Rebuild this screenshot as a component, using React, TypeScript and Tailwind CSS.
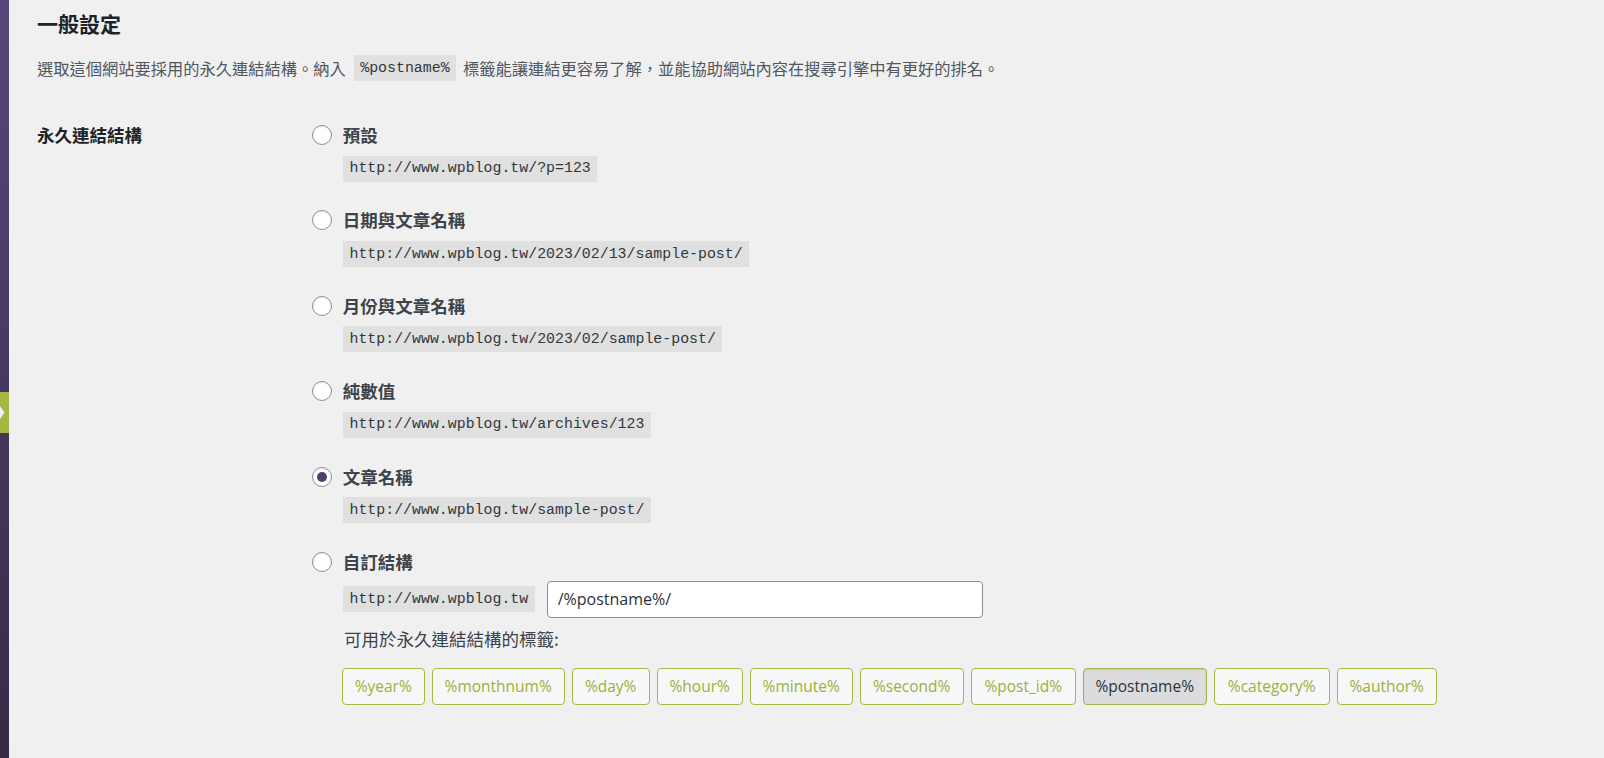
import React from 'react';

type PermalinkOption = {
  label: string;
  url: string;
  checked: boolean;
};

const options: PermalinkOption[] = [
  { label: '預設', url: 'http://www.wpblog.tw/?p=123', checked: false },
  { label: '日期與文章名稱', url: 'http://www.wpblog.tw/2023/02/13/sample-post/', checked: false },
  { label: '月份與文章名稱', url: 'http://www.wpblog.tw/2023/02/sample-post/', checked: false },
  { label: '純數值', url: 'http://www.wpblog.tw/archives/123', checked: false },
  { label: '文章名稱', url: 'http://www.wpblog.tw/sample-post/', checked: true },
];

// widths taken from the screenshot so the row lines up
const tags = [
  { name: '%year%', width: 'w-[83px]' },
  { name: '%monthnum%', width: 'w-[133px]' },
  { name: '%day%', width: 'w-[78px]' },
  { name: '%hour%', width: 'w-[86px]' },
  { name: '%minute%', width: 'w-[103px]' },
  { name: '%second%', width: 'w-[104px]' },
  { name: '%post_id%', width: 'w-[105px]' },
  { name: '%postname%', width: 'w-[124px]' },
  { name: '%category%', width: 'w-[116px]' },
  { name: '%author%', width: 'w-[100px]' },
];

const Radio: React.FC<{ checked: boolean }> = ({ checked }) => (
  <span className="flex h-[20px] w-[20px] shrink-0 items-center justify-center rounded-full border border-[#8c8f94] bg-white shadow-[inset_0_1px_2px_rgba(0,0,0,0.08)]">
    {checked && <span className="h-[10px] w-[10px] rounded-full bg-[#523f6d]" />}
  </span>
);

const Code: React.FC<{ children: React.ReactNode }> = ({ children }) => (
  <code className="inline-flex h-[26px] items-center bg-[#e0e0e1] px-[6.5px] font-['Liberation_Mono',monospace] text-[14.9px] text-[#32373c]">
    {children}
  </code>
);

const RadioRow: React.FC<{ label: string; checked: boolean }> = ({ label, checked }) => (
  <div className="flex h-[24px] items-center gap-[10.7px]">
    <Radio checked={checked} />
    <span className="text-[17.5px] font-bold leading-[24px] text-[#3c434a]">{label}</span>
  </div>
);

export default function App() {
  return (
    <div className="flex min-h-screen bg-[#f0f0f1] font-['Noto_Sans_CJK_TC','Noto_Sans',sans-serif]">
      <aside className="flex w-[9px] shrink-0 flex-col bg-gradient-to-b from-[#57477c] to-[#382a46]">
        <div className="h-[392px]" />
        <div className="relative h-[41px] bg-[#a4b843]">
          <svg className="absolute left-0 top-[14px]" width="5" height="13" viewBox="0 0 5 13">
            <polygon points="0,0 4.5,6.5 0,13" fill="#f0f0f1" />
          </svg>
        </div>
      </aside>

      <main className="flex-1 pl-[28px] pt-[9px]">
        <h2 className="text-[21px] font-bold leading-[28px] text-[#1d2327]">一般設定</h2>
        <p className="mt-[18px] text-[16.25px] leading-[26px] text-[#50575e]">
          選取這個網站要採用的永久連結結構。納入
          <code className="ml-[8px] mr-[7px] inline-block bg-[#e0e0e1] px-[6.5px] align-top font-['Liberation_Mono',monospace] text-[14.9px] leading-[26px] text-[#32373c]">
            %postname%
          </code>
          標籤能讓連結更容易了解，並能協助網站內容在搜尋引擎中有更好的排名。
        </p>

        <div className="mt-[42px] flex">
          <div className="w-[275px] shrink-0 text-[17.5px] font-bold leading-[24px] text-[#1d2327]">永久連結結構</div>

          <div className="flex flex-col gap-[26.9px]">
            {options.map((opt) => (
              <div key={opt.label} className="flex flex-col">
                <RadioRow label={opt.label} checked={opt.checked} />
                <div className="ml-[31px] mt-[8.5px] flex">
                  <Code>{opt.url}</Code>
                </div>
              </div>
            ))}

            <div className="flex flex-col">
              <RadioRow label="自訂結構" checked={false} />
              <div className="ml-[31px] mt-[7px] flex items-center gap-[12px]">
                <Code>http://www.wpblog.tw</Code>
                <input
                  readOnly
                  value="/%postname%/"
                  className="h-[37px] w-[436px] rounded-[4px] border border-[#8c8f94] bg-white px-[10px] font-['Open_Sans',sans-serif] text-[16px] text-[#2c3338] outline-none"
                />
              </div>
              <p className="ml-[32px] mt-[9px] text-[17.5px] leading-[24px] text-[#3c434a]">可用於永久連結結構的標籤:</p>
              <div className="ml-[29.7px] mt-[17px] flex gap-[7px]">
                {tags.map((tag) => {
                  const active = tag.name === '%postname%';
                  return (
                    <button
                      key={tag.name}
                      type="button"
                      className={
                        active
                          ? `flex h-[37px] ${tag.width} items-center justify-center rounded-[4px] border border-[#a4b24c] bg-[#dcdcde] font-['Open_Sans',sans-serif] text-[15.5px] text-[#2c3338] shadow-[inset_0_1px_2px_rgba(0,0,0,0.08)]`
                          : `flex h-[37px] ${tag.width} items-center justify-center rounded-[4px] border border-[#a7b944] bg-[#f6f7f7] font-['Open_Sans',sans-serif] text-[15.5px] text-[#9cb13c]`
                      }
                    >
                      {tag.name}
                    </button>
                  );
                })}
              </div>
            </div>
          </div>
        </div>
      </main>
    </div>
  );
}
